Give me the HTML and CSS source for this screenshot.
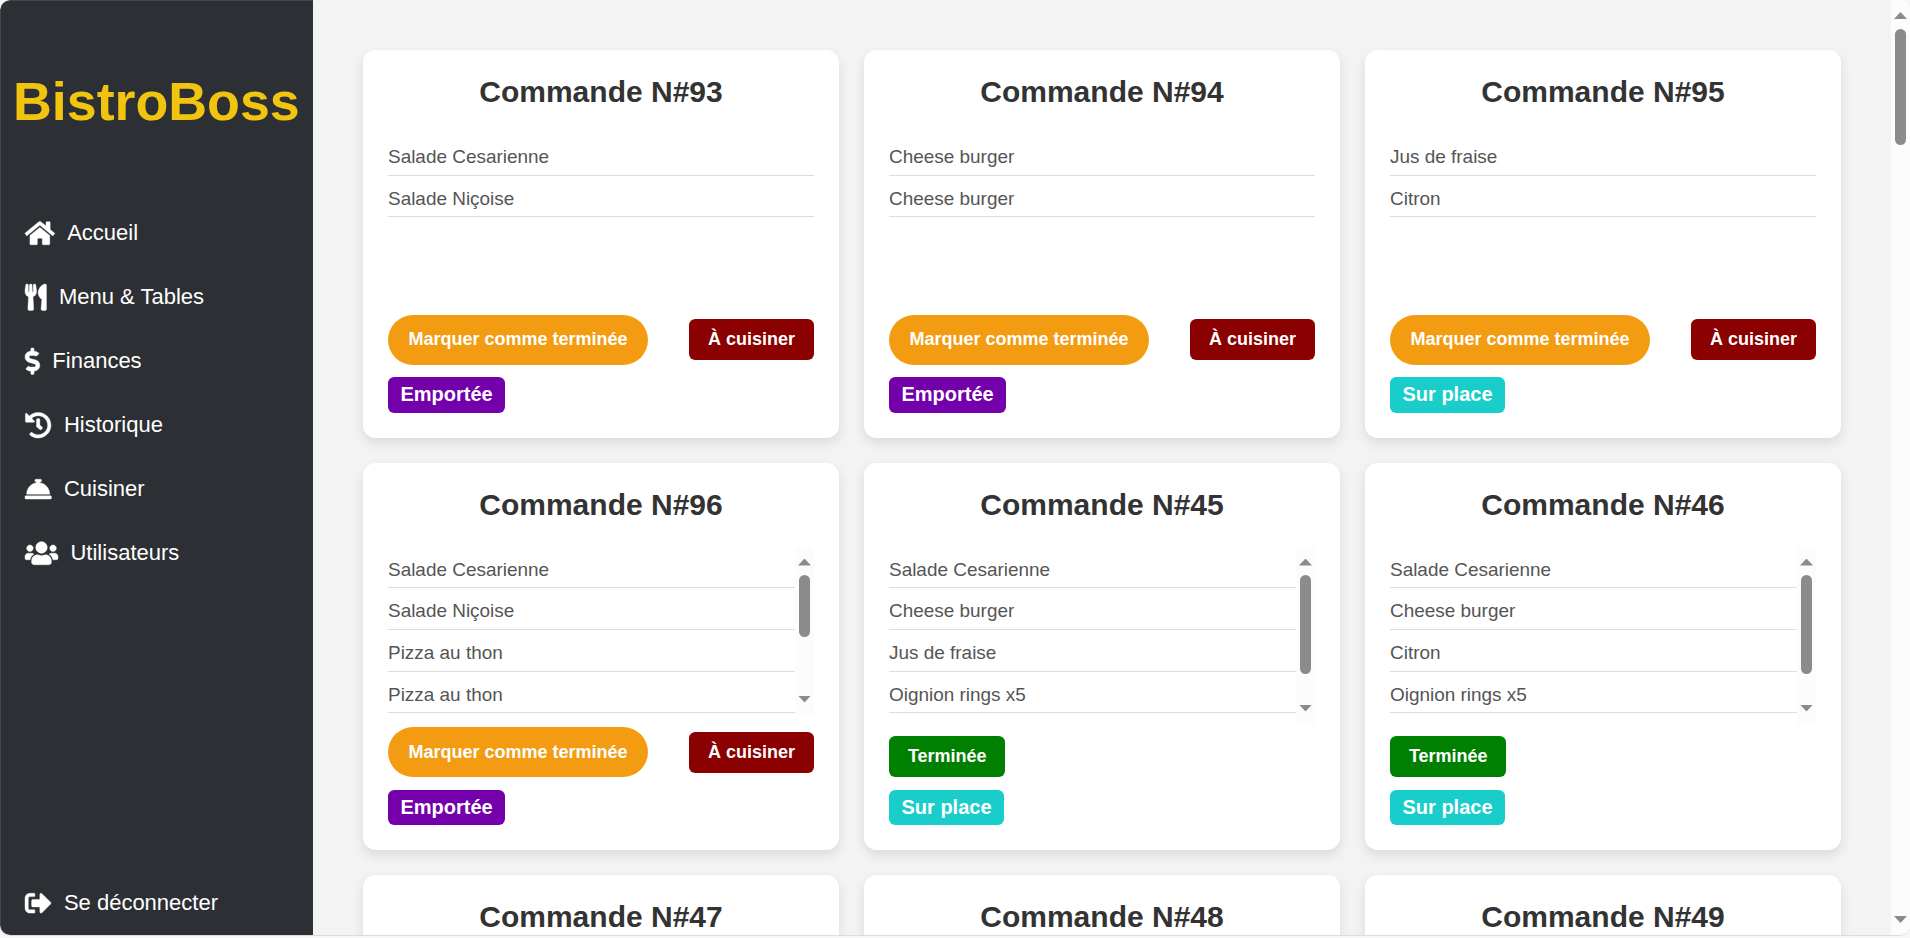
FILE: index.html
```html
<!DOCTYPE html>
<html lang="fr">
<head>
<meta charset="utf-8">
<title>BistroBoss</title>
<link rel="stylesheet" href="styles.css">
</head>
<body>
<div class="window">
  <aside class="sidebar">
    <h1 class="logo">BistroBoss</h1>
    <nav class="nav">
      <a class="nav-item"><svg class="icon" viewBox="0 0 576 512"><path d="M280.37 148.26L96 300.11V464a16 16 0 0 0 16 16l112.06-.29a16 16 0 0 0 15.92-16V368a16 16 0 0 1 16-16h64a16 16 0 0 1 16 16v95.64a16 16 0 0 0 16 16.05L464 480a16 16 0 0 0 16-16V300L295.67 148.26a12.19 12.19 0 0 0-15.3 0zM571.6 251.47L488 182.56V44.05a12 12 0 0 0-12-12h-56a12 12 0 0 0-12 12v72.61L318.47 43a48 48 0 0 0-61 0L4.34 251.47a12 12 0 0 0-1.6 16.9l25.5 31A12 12 0 0 0 45.15 301l235.22-193.74a12.19 12.19 0 0 1 15.3 0L530.9 301a12 12 0 0 0 16.9-1.6l25.5-31a12 12 0 0 0-1.7-16.93z"/></svg><span>Accueil</span></a>
      <a class="nav-item"><svg class="icon" viewBox="0 0 416 512"><path d="M207.9 15.2c.8 4.7 16.1 94.5 16.1 128.8 0 52.3-27.8 89.6-68.9 104.6L168 486.7c.7 13.7-10.2 25.3-24 25.3H80c-13.7 0-24.7-11.5-24-25.3l12.9-238.1C27.7 233.6 0 196.2 0 144 0 109.6 15.3 19.9 16.1 15.2 19.3-5.1 61.4-5.4 64 16.3v141.2c1.3 3.4 15.1 3.2 16 0 1.4-25.3 7.9-139.2 8-141.8 3.3-20.8 44.7-20.8 47.9 0 .2 2.7 6.6 116.5 8 141.8.9 3.2 14.8 3.4 16 0V16.3c2.6-21.6 44.8-21.4 47.9-1.1zm119.2 285.7l-15 185.1c-1.2 14 9.9 26 23.9 26h56c13.3 0 24-10.7 24-24V24c0-13.2-10.7-24-24-24-82.5 0-221.4 178.5-64.9 300.9z"/></svg><span>Menu &amp; Tables</span></a>
      <a class="nav-item"><svg class="icon" viewBox="0 0 288 512"><path d="M209.2 233.4l-108-31.6C88.7 198.2 80 186.5 80 173.5c0-16.3 13.2-29.5 29.5-29.5h66.3c12.2 0 24.2 3.7 34.2 10.5 6.1 4.1 14.3 3.1 19.5-2l34.8-34c7.1-6.9 6.1-18.4-1.8-24.5C238 74.8 207.4 64.1 176 64V16c0-8.8-7.2-16-16-16h-32c-8.8 0-16 7.2-16 16v48h-2.5C45.8 64-5.4 118.7.5 183.6c4.2 46.1 39.4 83.6 83.8 96.6l102.5 30c12.5 3.7 21.2 15.3 21.2 28.3 0 16.3-13.2 29.5-29.5 29.5h-66.3C100 368 88 364.3 78 357.5c-6.1-4.1-14.3-3.1-19.5 2l-34.8 34c-7.1 6.9-6.1 18.4 1.8 24.5 24.5 19.2 55.1 29.9 86.5 30v48c0 8.8 7.2 16 16 16h32c8.8 0 16-7.2 16-16v-48.2c46.6-.9 90.3-28.6 105.7-72.7 21.5-61.6-14.6-124.8-72.5-141.7z"/></svg><span>Finances</span></a>
      <a class="nav-item"><svg class="icon" viewBox="0 0 512 512"><path d="M504 255.531c.253 136.64-111.18 248.372-247.82 248.468-59.015.042-113.223-20.53-155.822-54.911-11.077-8.94-11.905-25.541-1.839-35.607l11.267-11.267c8.609-8.609 22.353-9.551 31.891-1.984C173.062 425.135 212.781 440 256 440c101.705 0 184-82.311 184-184 0-101.705-82.311-184-184-184-48.814 0-93.149 18.969-126.068 49.932l50.754 50.754c10.08 10.08 2.941 27.314-11.313 27.314H24c-8.837 0-16-7.163-16-16V38.627c0-14.254 17.234-21.393 27.314-11.314l49.372 49.372C129.209 34.136 189.552 8 256 8c136.81 0 247.747 110.78 248 247.531zm-180.912 78.784l9.823-12.63c8.138-10.463 6.253-25.542-4.21-33.679L288 256.349V152c0-13.255-10.745-24-24-24h-16c-13.255 0-24 10.745-24 24v135.651l65.409 50.874c10.463 8.137 25.541 6.253 33.679-4.21z"/></svg><span>Historique</span></a>
      <a class="nav-item"><svg class="icon" viewBox="0 0 512 512"><path d="M288 130.54V112h16c8.84 0 16-7.16 16-16V80c0-8.84-7.16-16-16-16h-96c-8.84 0-16 7.16-16 16v16c0 8.84 7.16 16 16 16h16v18.54C115.49 146.11 32 239.18 32 352h448c0-112.82-83.49-205.89-192-221.46zM496 384H16c-8.84 0-16 7.16-16 16v32c0 8.84 7.16 16 16 16h480c8.84 0 16-7.16 16-16v-32c0-8.84-7.16-16-16-16z"/></svg><span>Cuisiner</span></a>
      <a class="nav-item"><svg class="icon" viewBox="0 0 640 512"><path d="M96 224c35.3 0 64-28.7 64-64s-28.7-64-64-64-64 28.7-64 64 28.7 64 64 64zm448 0c35.3 0 64-28.7 64-64s-28.7-64-64-64-64 28.7-64 64 28.7 64 64 64zm32 32h-64c-17.6 0-33.5 7.1-45.1 18.6 40.3 22.1 68.9 62 75.1 109.4h66c17.7 0 32-14.3 32-32v-32c0-35.3-28.7-64-64-64zm-256 0c61.9 0 112-50.1 112-112S381.9 32 320 32 208 82.1 208 144s50.1 112 112 112zm76.8 32h-8.3c-20.8 10-43.9 16-68.5 16s-47.6-6-68.5-16h-8.3C179.6 288 128 339.6 128 403.2V432c0 26.5 21.5 48 48 48h288c26.5 0 48-21.5 48-48v-28.8c0-63.6-51.6-115.2-115.2-115.2zm-223.7-13.4C161.5 263.1 145.6 256 128 256H64c-35.3 0-64 28.7-64 64v32c0 17.7 14.3 32 32 32h65.9c6.3-47.4 34.9-87.3 75.2-109.4z"/></svg><span>Utilisateurs</span></a>
    </nav>
    <a class="nav-item logout"><svg class="icon" viewBox="0 0 512 512"><path d="M497 273L329 441c-15 15-41 4.5-41-17v-96H152c-13.3 0-24-10.7-24-24v-96c0-13.3 10.7-24 24-24h136V88c0-21.4 25.9-32 41-17l168 168c9.3 9.4 9.3 24.6 0 34zM192 436v-40c0-6.6-5.4-12-12-12H96c-17.7 0-32-14.3-32-32V160c0-17.7 14.3-32 32-32h84c6.6 0 12-5.4 12-12V76c0-6.6-5.4-12-12-12H96c-53 0-96 43-96 96v192c0 53 43 96 96 96h84c6.6 0 12-5.4 12-12z"/></svg><span>Se déconnecter</span></a>
  </aside>

  <main class="orders">
    <article class="card">
      <h2 class="title">Commande N#93</h2>
      <div class="list"><ul class="items"><li>Salade Cesarienne</li><li>Salade Niçoise</li></ul></div>
      <div class="actions"><button class="finish">Marquer comme terminée</button><span class="status todo">À cuisiner</span></div>
      <span class="badge takeaway">Emportée</span>
    </article>
    <article class="card">
      <h2 class="title">Commande N#94</h2>
      <div class="list"><ul class="items"><li>Cheese burger</li><li>Cheese burger</li></ul></div>
      <div class="actions"><button class="finish">Marquer comme terminée</button><span class="status todo">À cuisiner</span></div>
      <span class="badge takeaway">Emportée</span>
    </article>
    <article class="card">
      <h2 class="title">Commande N#95</h2>
      <div class="list"><ul class="items"><li>Jus de fraise</li><li>Citron</li></ul></div>
      <div class="actions"><button class="finish">Marquer comme terminée</button><span class="status todo">À cuisiner</span></div>
      <span class="badge onsite">Sur place</span>
    </article>
    <article class="card">
      <h2 class="title">Commande N#96</h2>
      <div class="list"><ul class="items"><li>Salade Cesarienne</li><li>Salade Niçoise</li><li>Pizza au thon</li><li>Pizza au thon</li></ul><div class="scrollbar"><i class="arrow up"></i><i class="thumb short"></i><i class="arrow down"></i></div></div>
      <div class="actions"><button class="finish">Marquer comme terminée</button><span class="status todo">À cuisiner</span></div>
      <span class="badge takeaway">Emportée</span>
    </article>
    <article class="card">
      <h2 class="title">Commande N#45</h2>
      <div class="list"><ul class="items"><li>Salade Cesarienne</li><li>Cheese burger</li><li>Jus de fraise</li><li>Oignion rings x5</li></ul><div class="scrollbar"><i class="arrow up"></i><i class="thumb"></i><i class="arrow down"></i></div></div>
      <div class="actions"><span class="status done">Terminée</span></div>
      <span class="badge onsite">Sur place</span>
    </article>
    <article class="card">
      <h2 class="title">Commande N#46</h2>
      <div class="list"><ul class="items"><li>Salade Cesarienne</li><li>Cheese burger</li><li>Citron</li><li>Oignion rings x5</li></ul><div class="scrollbar"><i class="arrow up"></i><i class="thumb"></i><i class="arrow down"></i></div></div>
      <div class="actions"><span class="status done">Terminée</span></div>
      <span class="badge onsite">Sur place</span>
    </article>
    <article class="card"><h2 class="title">Commande N#47</h2></article>
    <article class="card"><h2 class="title">Commande N#48</h2></article>
    <article class="card"><h2 class="title">Commande N#49</h2></article>
  </main>
  <div class="scrollbar page-scrollbar"><i class="arrow up"></i><i class="thumb"></i><i class="arrow down"></i></div>
</div>
</body>
</html>
```
FILE: styles.css
```css
* { box-sizing: border-box; }
body {
  margin: 0;
  height: 938px;
  overflow: hidden;
  background: #f6f6f6;
  font-family: "Liberation Sans", Arial, sans-serif;
}
.window {
  display: flex;
  height: 936px;
  overflow: hidden;
  border-bottom: 1px solid #dcdcdc;
  border-radius: 10px;
  background: #f3f3f3;
}
.sidebar {
  display: flex;
  flex-direction: column;
  width: 313px;
  height: 935px;
  flex: none;
  border-top: 1px solid #44474b;
  border-left: 1px solid #44474b;
  border-radius: 10px 0 0 10px;
  background: #2c2f33;
  color: #fff;
}
.logo {
  margin: 69px 0 0 12px;
  font-size: 53.75px;
  line-height: 62px;
  color: #f1c40f;
}
.nav {
  display: flex;
  flex-direction: column;
  margin-top: 69.5px;
}
.nav-item {
  display: flex;
  align-items: center;
  gap: 12.5px;
  height: 63.9px;
  padding-left: 24px;
  font-size: 22px;
}
.logout { margin-top: auto; }
.icon {
  height: 26.4px;
  flex: none;
  overflow: visible;
  fill: currentColor;
  stroke: currentColor;
  stroke-width: 8px;
}
.orders {
  display: grid;
  grid-template-columns: repeat(3, 476px);
  grid-auto-rows: 387.5px;
  gap: 25px;
  flex: 1;
  padding: 50px 0 0 50px;
}
.card {
  display: flex;
  flex-direction: column;
  padding: 25px;
  border-radius: 12.5px;
  background: #fff;
  box-shadow: 0 5px 12px rgba(0, 0, 0, .1);
}
.title {
  margin: 0 0 25px;
  font-size: 30px;
  line-height: 34px;
  text-align: center;
  color: #333;
}
.list {
  display: flex;
  flex: 1;
  min-height: 0;
  overflow: hidden;
}
.items {
  flex: 1;
  margin: 0;
  padding: 0;
  list-style: none;
}
.items li {
  height: 41.7px;
  padding-top: 12px;
  border-bottom: 1px solid #ddd;
  font-size: 18.95px;
  line-height: 21px;
  color: #555;
}
.actions {
  display: flex;
  justify-content: space-between;
  align-items: center;
  margin: 12.5px 0;
}
.finish {
  width: 260px;
  height: 50px;
  padding: 0;
  border: 0;
  border-radius: 25px;
  background: #f39c12;
  color: #fff;
  font: bold 18px "Liberation Sans", Arial, sans-serif;
}
.status {
  padding: 0 18.9px;
  border-radius: 6.25px;
  font-size: 18px;
  font-weight: bold;
  line-height: 41px;
  color: #fff;
}
.todo { background: #8b0000; }
.done { background: #008000; }
.badge {
  align-self: flex-start;
  padding: 0 12.5px;
  border-radius: 6.25px;
  font-size: 20px;
  font-weight: bold;
  line-height: 35.5px;
  color: #fff;
}
.takeaway { background: #7300ab; }
.onsite { background: #19cdcb; }

.scrollbar {
  display: flex;
  flex-direction: column;
  align-items: center;
  flex: none;
  width: 19px;
  padding: 12px 0;
  background: #fcfcfc;
}
.arrow {
  width: 13px;
  height: 7px;
  background: #8b8b8b;
}
.up { clip-path: polygon(50% 0, 100% 100%, 0 100%); }
.down {
  margin-top: auto;
  clip-path: polygon(0 0, 100% 0, 50% 100%);
}
.thumb {
  width: 11px;
  height: 99px;
  margin-top: 9.5px;
  border-radius: 6px;
  background: #8b8b8b;
}
.thumb.short { height: 62px; }
.page-scrollbar { height: 935px; }
.page-scrollbar .thumb { height: 116px; margin-top: 10px; }
```
